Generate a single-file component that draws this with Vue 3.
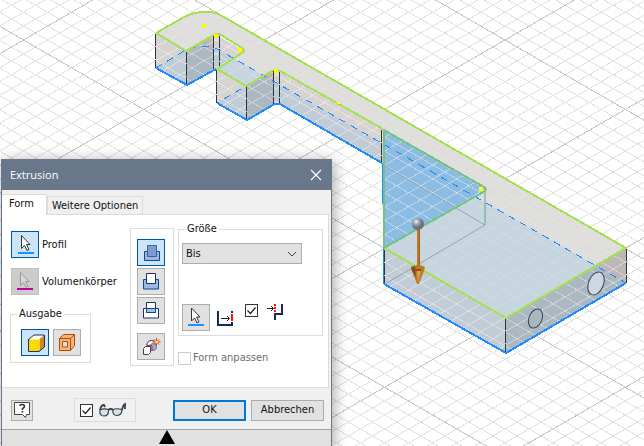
<script setup>
import { ref } from 'vue'

const target = ref('Bis')
const operation = ref('join')
const output = ref('solid')
const preview = ref(true)
const minimal = ref(true)
const matchShape = ref(false)

// Isometric ground grid: every tenth line is a major one.
const SLOPE = 0.577
const STEP = 13.89
const rising = []
const falling = []
for (let i = -60; i <= 90; i++) {
  const major = i % 10 === 0
  const y = 40 + i * STEP
  falling.push({ id: i, major, y1: y - 23.5 * SLOPE, y2: y + 1176.5 * SLOPE })
  rising.push({ id: i, major, y1: y + 23.5 * SLOPE, y2: y - 1176.5 * SLOPE })
}
const lines = [
  ...falling.map((l) => ({ ...l, id: 'f' + l.id })),
  ...rising.map((l) => ({ ...l, id: 'r' + l.id })),
].sort((a, b) => a.major - b.major)

const uprights = [
  [155, 34, 68], [186, 51, 85], [213, 36, 69], [219, 36, 68], [216, 69, 103],
  [246, 86, 119], [273, 71, 104], [279, 72, 104], [381, 130, 163],
  [384, 250, 284], [505, 318, 353], [626, 249, 283],
]
const points = [[204, 26], [216, 36], [240, 50], [276, 71], [481, 189]]

const operations = [
  { id: 'join', label: 'Vereinigung' },
  { id: 'cut', label: 'Differenz' },
  { id: 'intersect', label: 'Schnittmenge' },
  { id: 'new', label: 'Neuer Volumenkörper' },
]
</script>

<template>
  <main class="workspace">
    <svg class="scene" viewBox="0 0 644 446" preserveAspectRatio="xMinYMin slice" aria-hidden="true">
      <defs>
        <clipPath id="topClip">
          <path d="M156 33 L194 13 L219 13 L626 248 L506 318 L384 248 L384 130 L278 71 L246 86 L217 69 L244 51 L219 35 L186 51Z" />
        </clipPath>
        <clipPath id="sideClip">
          <path d="M156 33 L186 51 L216 34 L244 51 L217 69 L246 86 L276 70 L383 130 L485 189 L384 248 L506 318 L626 248 V283 L506 353 L384 284 L382 163 L279 104 L246 120 L217 103 V69 L187 85 L156 68Z" />
        </clipPath>
        <radialGradient id="ball" cx="35%" cy="30%">
          <stop offset="0" stop-color="#f1f3f6" />
          <stop offset="0.45" stop-color="#a3a8b0" />
          <stop offset="1" stop-color="#6b727c" />
        </radialGradient>
      </defs>

      <g class="grid">
        <line v-for="l in lines" :key="l.id" x1="0" x2="1200" :y1="l.y1" :y2="l.y2" :class="{ major: l.major }" />
      </g>

      <path fill="#dfdedc" d="M156 33 L184 17 Q194 12 204 12 H211 Q217 13 222 16 L626 248 L506 318 L384 248 L383 129 L280 71 Q276 68 272 71 L246 86 L217 69 L242 53 Q246 51 242 48 L221 35 Q216 33 212 36 L186 51Z" />
      <g fill="#d6d3d0">
        <path d="M156 33 L186 51 V85 L156 68Z" />
        <path d="M217 69 L246 86 V120 L217 103Z" />
        <path d="M217 35 L244 51 L217 69Z" />
        <path d="M278 71 L383 130 V163 L278 104Z" />
        <path d="M384 248 L506 318 V353 L384 284Z" />
      </g>
      <g fill="#bbb8b5">
        <path d="M186 51 L214 35 V69 L186 85Z" />
        <path d="M246 86 L274 70 V104 L246 120Z" />
        <path d="M506 318 L626 248 V283 L506 353Z" />
      </g>
      <path fill="#d3d2d2" d="M214 35 H220 V68 H214Z M274 70 H280 V104 H274Z" />
      <path fill="#7cb8ea" fill-opacity="0.24" d="M156 68 L184 51 Q204 41 222 52 L626 283 L506 353 L384 284 L382 163 L279 104 H274 L246 120 L217 103 L246 86 L217 69 L187 85Z" />

      <g clip-path="url(#topClip)" class="veil faint">
        <line v-for="l in lines" :key="l.id" x1="0" x2="1200" :y1="l.y1" :y2="l.y2" />
      </g>
      <path fill="#8dbce3" d="M383 130 L485 189 L385 248Z" />
      <g clip-path="url(#sideClip)" class="veil">
        <line v-for="l in lines" :key="l.id" x1="0" x2="1200" :y1="l.y1" :y2="l.y2" />
      </g>

      <g class="hidden-edge">
        <path d="M382 164 L485 225 L385 284" />
        <path class="teal" d="M485 192 V225" />
      </g>
      <g class="upright">
        <path v-for="u in uprights" :key="u[0]" :d="`M${u[0] + 0.5} ${u[1]} V${u[2]}`" />
      </g>
      <path class="dashed" d="M156 68 L184 51 Q193 46 204 46 Q212 46 219 50 L626 283" />
      <path class="dashed" d="M217 69 L246 86 L217 103" />
      <g class="holes">
        <ellipse cx="596" cy="283.500" rx="7.500" ry="12" transform="rotate(22 596 283.5)" fill="#ccd7e1" />
        <ellipse cx="535.500" cy="318.500" rx="6.500" ry="10" transform="rotate(22 535.5 318.5)" fill="#a9b8c0" />
      </g>
      <g class="bottom-edge">
        <path d="M156 68 L187 85 L214 70 L217 69" />
        <path d="M217 103 L247 120 L273 105 Q276 103 280 104 L382 163" />
        <path d="M384 284 L506 353 L626 283" />
        <path class="thin" d="M382.500 163 L384 284" />
      </g>
      <g class="top-edge">
        <path d="M156 33 L184 17 Q194 12 204 12 H211 Q217 13 222 16 L626 248 L506 318 L384 248" />
        <path d="M156 33 L186 51 L212 36 Q216 33 221 35 L242 48 Q246 51 242 53 L217 69 L246 86 L272 71 Q276 68 280 71 L383 129" />
        <path class="profile" d="M384 130 V248 L485 191 Q487 189 484 187Z" />
      </g>

      <g fill="#ff0">
        <rect v-for="p in points" :key="p[0]" :x="p[0] - 2" :y="p[1] - 2" width="4" height="4" />
        <rect x="337" y="102" width="3" height="2" />
      </g>

      <rect x="417" y="228" width="3" height="42" fill="#b97a2a" />
      <path fill="#a06018" d="M419 228 h1 v42 h-1z" />
      <path fill="#b97a2a" d="M411 267 Q418 263 425 267 L424 271 L419 284 H417 L412 271Z" />
      <path fill="#7c5122" d="M411 267 L415 266 L416 277 L412 271Z" />
      <path fill="#dba13e" d="M417 271 L421 271 L418 283Z" />
      <path fill="#9d4c10" d="M415 269 H421 V271 H415Z" />
      <circle cx="418" cy="224" r="6" fill="url(#ball)" />
    </svg>

    <section class="dialog" role="dialog" aria-labelledby="dialog-title">
      <header class="titlebar">
        <h1 id="dialog-title">Extrusion</h1>
        <button class="close" type="button" aria-label="Schließen">
          <svg width="12" height="12" viewBox="0 0 12 12"><path d="M1 1 L11 11 M11 1 L1 11" stroke="#fff" stroke-width="1.200" /></svg>
        </button>
      </header>

      <nav class="tabs" role="tablist">
        <button class="tab active" type="button" role="tab" aria-selected="true">Form</button>
        <button class="tab" type="button" role="tab" aria-selected="false">Weitere Optionen</button>
      </nav>

      <div class="panel">
        <div class="selectors">
          <div class="pick">
            <button id="pick-profile" class="tool selected" type="button">
              <svg width="26" height="25" viewBox="0 0 26 25">
                <path d="M9.500 3.500 V16.500 L12.500 13.500 L15 18.500 L17 17.500 L14.500 12.500 H18Z" fill="#fff" stroke="#333" />
                <path d="M6 21 H22" stroke="#1e90ff" stroke-width="2" />
              </svg>
            </button>
            <label for="pick-profile">Profil</label>
          </div>
          <div class="pick">
            <button id="pick-solid" class="tool muted" type="button">
              <svg width="26" height="25" viewBox="0 0 26 25">
                <path d="M8.500 3.500 V16.500 L11.500 13.500 L14 18.500 L16 17.500 L13.500 12.500 H17Z" fill="#d9d9d9" stroke="#999" />
                <path d="M5 20 H21" stroke="#c4009a" stroke-width="2" />
              </svg>
            </button>
            <label for="pick-solid">Volumenkörper</label>
          </div>
          <fieldset class="group output">
            <legend>Ausgabe</legend>
            <div class="output-row">
              <button class="tool" :class="{ selected: output === 'solid' }" type="button" aria-label="Volumenkörper" @click="output = 'solid'">
                <svg width="26" height="25" viewBox="0 0 26 25">
                  <path d="M7 9 L12 5 H22 V17 L17 21 H7Z" fill="#fff" stroke="#17365f" />
                  <path d="M17.500 9 L22 5.500 V17 L17.500 20.500Z" fill="#d48a17" />
                  <path d="M7 9.500 H17.500 V21 H7Z" fill="#ffd800" />
                  <path d="M6.500 9 V21.500 H17 L22.500 17 V5" fill="none" stroke="#17365f" />
                </svg>
              </button>
              <button class="tool" :class="{ selected: output === 'surface' }" type="button" aria-label="Fläche" @click="output = 'surface'">
                <svg width="26" height="25" viewBox="0 0 26 25" stroke="#a64f12">
                  <path d="M5.500 8.500 L9.500 4.500 H20.500 V15.500 L16.500 20.500 H5.500Z" fill="#ffb274" />
                  <path d="M8.500 11.500 H13.500 V17 H8.500Z" fill="#e0e0e0" />
                  <path d="M5.500 8.500 H16.500 V20.500 M16.500 8.500 L20.500 4.500" fill="none" />
                </svg>
              </button>
            </div>
          </fieldset>
        </div>

        <div class="group operations">
          <button v-for="op in operations" :key="op.id" class="tool" :class="[op.id, { selected: operation === op.id }]" type="button" :aria-label="op.label" @click="operation = op.id">
            <svg v-if="op.id === 'join'" width="26" height="25" viewBox="0 0 26 25" stroke="#0c4a91">
              <path d="M6.500 11.500 H21.500 V20.500 H6.500Z" fill="#9cb8e0" />
              <path d="M9.500 5.500 H18.500 V16.500 H9.500Z" fill="#7f9bcf" stroke="#3d62a2" />
            </svg>
            <svg v-else-if="op.id === 'cut'" width="26" height="25" viewBox="0 0 26 25" stroke="#0c4a91">
              <path d="M5.500 10.500 H20.500 V20 H5.500Z" fill="#9cb8e0" />
              <path d="M8.500 4.500 H17.500 V14.500 H8.500Z" fill="#fff" stroke="#17365f" />
            </svg>
            <svg v-else-if="op.id === 'intersect'" width="26" height="25" viewBox="0 0 26 25" stroke="#17365f">
              <path d="M5.500 10.500 H20.500 V20 H5.500Z" fill="#fff" />
              <path d="M8.500 4.500 H17.500 V14.500 H8.500Z" fill="#fff" />
              <path d="M9 11 H17 V14 H9Z" fill="#9cc0ea" stroke="none" />
              <path d="M8.500 10.500 V14.500 H17.500 V10.500Z" fill="none" stroke="#0c4a91" />
            </svg>
            <svg v-else width="26" height="25" viewBox="0 0 26 25">
              <circle cx="13.500" cy="11" r="4.500" fill="#fff" stroke="#17365f" />
              <circle cx="15" cy="13" r="3.500" fill="#8eb5e8" stroke="#5d7ea8" />
              <path d="M9 11.500 H14 V17" fill="none" stroke="#e21b1b" />
              <path d="M5.500 14.500 L7.500 12.500 H12.500 V18.500 L10.500 20.500 H5.500Z" fill="#fff" stroke="#444" />
              <path d="M18.500 4 V12 M14.500 8 H22.500 M16 5.500 L21 10.500 M21 5.500 L16 10.500" stroke="#e8380d" />
              <circle cx="18.500" cy="8" r="1.500" fill="#ffe14a" />
            </svg>
          </button>
        </div>

        <div class="extent">
          <fieldset class="group size">
            <legend>Größe</legend>
            <div class="size-body">
              <select v-model="target" aria-label="Größe">
                <option>Bis</option>
                <option>Abstand</option>
                <option>Alle</option>
              </select>
              <div class="size-row">
                <button class="tool" type="button" aria-label="Ziel wählen">
                  <svg width="26" height="25" viewBox="0 0 26 25">
                    <path d="M8.500 3 V16 L11.500 13 L14 18 L16 17 L13.500 12 H17Z" fill="#fff" stroke="#333" />
                    <path d="M5 20 H21" stroke="#1e90ff" stroke-width="2" />
                  </svg>
                </button>
                <svg class="to-face" width="17" height="17" viewBox="0 0 17 17">
                  <path d="M1 1 V15 H15 V12" fill="none" stroke="#142c57" stroke-width="2" />
                  <path d="M14 1 H16 V3 H14Z" fill="#142c57" />
                  <path d="M4 8.500 H12 M10 6 L12.500 8.500 L10 11" fill="none" stroke="#222" />
                  <path d="M15 4 V11" stroke="#f11" stroke-width="2" />
                </svg>
                <label class="min-solution">
                  <input v-model="minimal" type="checkbox" aria-label="Minimale Lösung" />
                  <svg width="17" height="17" viewBox="0 0 17 17">
                    <path d="M15 0 V10 H8 V16" fill="none" stroke="#142c57" stroke-width="2" />
                    <path d="M0 4.500 H6 M4 2 L6.500 4.500 L4 7" fill="none" stroke="#222" />
                    <path d="M8 0 V9" stroke="#f11" stroke-width="2" stroke-dasharray="2 1" />
                  </svg>
                </label>
              </div>
            </div>
          </fieldset>
          <label class="match">
            <input v-model="matchShape" type="checkbox" disabled />
            <span>Form anpassen</span>
          </label>
        </div>
      </div>

      <footer class="actions">
        <button class="help" type="button" aria-label="Hilfe">
          <svg width="18" height="18" viewBox="0 0 18 18">
            <path d="M1.500 1.500 H16.500 V13.500 H13.500 L12.500 16.500 L9.500 13.500 H1.500Z" fill="#fff" stroke="#444" />
            <path d="M7 5 Q7 3.500 9 3.500 Q11.500 3.500 11.500 5.500 Q11.500 6.500 9.500 7.500 V9 M9.500 10 V11.500" fill="none" stroke="#333" stroke-width="1.600" />
          </svg>
        </button>
        <label class="group preview">
          <input v-model="preview" type="checkbox" aria-label="Vorschau" />
          <svg width="30" height="16" viewBox="0 0 30 16" fill="none" stroke="#3a3f45">
            <path d="M2 8 Q3 3 6 3 L7 5 M24 8 Q25 3 27 2 V7" stroke-width="1.800" />
            <path d="M2 8 Q1 14 6 14 Q11 14 10.500 7.500 Q6 6 2 8Z M15 7.500 Q14 13.500 19 13.500 Q24 13 24 7.500 Q19 6 15 7.500Z" fill="#d5e2e8" stroke-width="1.200" />
            <path d="M10 8 Q13 6 15 8" stroke-width="1.800" />
          </svg>
        </label>
        <button class="push primary" type="button">OK</button>
        <button class="push" type="button">Abbrechen</button>
      </footer>

      <button class="collapse" type="button" aria-label="Einklappen">
        <svg width="16" height="14" viewBox="0 0 16 14"><path d="M8 0 L16 14 H0Z" /></svg>
      </button>
    </section>
  </main>
</template>

<style>
body {
  background: #fff;
}
</style>

<style scoped>
.workspace {
  position: relative;
  height: 100vh;
  overflow: hidden;
  font: 11px/14px "DejaVu Sans Condensed", "DejaVu Sans", sans-serif;
  color: #111;
}
.workspace * {
  box-sizing: border-box;
}
.scene {
  display: block;
  width: 100%;
  height: 100%;
}
.grid {
  stroke: #e3e3e3;
  shape-rendering: crispEdges;
}
.grid .major {
  stroke: #c6c6c6;
}
.veil {
  stroke: #fff;
  stroke-opacity: 0.38;
  shape-rendering: crispEdges;
}
.veil.faint {
  stroke-opacity: 0.12;
}
.upright {
  stroke: #2f3438;
  stroke-dasharray: 12 1;
}
.hidden-edge {
  fill: none;
  stroke: #94a5ae;
}
.hidden-edge .teal {
  stroke: #5ea58c;
}
.dashed {
  fill: none;
  stroke: #1e88ff;
  stroke-dasharray: 7 6;
  shape-rendering: crispEdges;
}
.holes {
  stroke: #39424c;
}
.bottom-edge {
  fill: none;
  stroke: #1e8bff;
  stroke-width: 2;
  shape-rendering: crispEdges;
}
.bottom-edge .thin {
  stroke-width: 1;
}
.top-edge {
  fill: none;
  stroke: #a4e052;
  stroke-width: 2;
  shape-rendering: crispEdges;
}
.top-edge .profile {
  stroke: #74c384;
}

button,
select,
input {
  margin: 0;
  padding: 0;
  font: inherit;
  color: inherit;
}
.dialog {
  position: absolute;
  left: 1px;
  top: 159px;
  width: 331px;
  border: 1px solid #68778a;
  background: #f0f0f0;
  box-shadow: 2px 2px 14px rgba(0, 0, 0, 0.35);
}
.titlebar {
  display: flex;
  align-items: center;
  justify-content: space-between;
  height: 30px;
  padding: 0 9px 0 8px;
  background: #68778a;
  color: #fff;
}
.titlebar h1 {
  margin: 0;
  font: 11px/16px "Open Sans", sans-serif;
}
.close {
  display: flex;
  border: 0;
  background: none;
}
.tabs {
  display: flex;
  align-items: flex-end;
  height: 24px;
}
.tab {
  height: 18px;
  padding: 0 4px;
  border: 1px solid #dcdcdc;
  border-bottom: 0;
  background: #f0f0f0;
}
.tab.active {
  height: 21px;
  margin-bottom: -1px;
  padding: 0 12px 2px 7px;
  border-left: 0;
  background: #fff;
  position: relative;
}
.panel {
  display: flex;
  height: 174px;
  margin-right: 2px;
  padding: 7px 5px 0 8px;
  border: 1px solid #dcdcdc;
  border-left: 0;
  background: #fff;
}
.group {
  margin: 0;
  padding: 0;
  border: 1px solid #dcdcdc;
}
.tool {
  display: flex;
  flex: none;
  width: 28px;
  height: 27px;
  border: 1px solid #adadad;
  background: #e1e1e1;
}
.tool.selected {
  border-color: #00569f;
  background: #cce4f7;
}
.tool.muted {
  background: #ccc;
  border-color: #bfbfbf;
}
.selectors {
  flex: 1;
  padding-top: 9px;
}
.pick {
  display: flex;
  align-items: center;
  gap: 3px;
  margin: 0 0 10px 1px;
}
legend {
  margin-left: 6px;
  padding: 0 2px;
}
.output {
  width: 81px;
  height: 56px;
  margin-top: 12px;
}
.output-row {
  display: flex;
  gap: 4px;
  padding: 8px 0 0 10px;
}
.operations {
  display: flex;
  flex-direction: column;
  gap: 2px;
  width: 44px;
  height: 138px;
  margin: 6px 4px 0 0;
  padding: 10px 0 0 6px;
}
.operations .new {
  margin-top: 7px;
}
.extent {
  width: 145px;
}
.size {
  height: 114px;
}
.size-body {
  padding: 7px 3px 0;
}
select {
  display: block;
  width: 120px;
  height: 21px;
  padding: 0 3px;
  border: 1px solid #adadad;
  border-radius: 0;
  appearance: none;
  background-color: #e1e1e1;
  background-image: url("data:image/svg+xml,%3Csvg xmlns='http://www.w3.org/2000/svg' width='10' height='6'%3E%3Cpath d='M1 1l4 4 4-4' fill='none' stroke='%23444'/%3E%3C/svg%3E");
  background-repeat: no-repeat;
  background-position: right 4px center;
}
.size-row {
  display: flex;
  align-items: flex-start;
  padding-top: 40px;
}
.to-face {
  margin: 6px 11px 0 7px;
}
.min-solution {
  display: flex;
  gap: 9px;
}
input[type="checkbox"] {
  flex: none;
  width: 13px;
  height: 13px;
  border: 1px solid #333;
  appearance: none;
  background: #fff;
}
input[type="checkbox"]:checked {
  background-image: url("data:image/svg+xml,%3Csvg xmlns='http://www.w3.org/2000/svg' width='11' height='11'%3E%3Cpath d='M1.500 5.500l3 3 5-6' fill='none' stroke='%23222' stroke-width='1.200'/%3E%3C/svg%3E");
}
input[type="checkbox"]:disabled {
  border-color: #ccc;
}
.match {
  display: flex;
  align-items: center;
  gap: 2px;
  margin-top: 15px;
  color: #6d6d6d;
}
.actions {
  display: flex;
  align-items: center;
  height: 41px;
  padding: 3px 7px 0 9px;
}
.help {
  display: flex;
  align-items: center;
  justify-content: center;
  width: 22px;
  height: 21px;
  border: 1px solid #adadad;
  background: #e1e1e1;
}
.preview {
  display: flex;
  align-items: center;
  gap: 5px;
  width: 62px;
  height: 24px;
  margin: 0 auto 0 41px;
  padding-left: 5px;
}
.push {
  width: 73px;
  height: 21px;
  margin-left: 5px;
  border: 1px solid #adadad;
  background: #e1e1e1;
}
.push.primary {
  border: 2px solid #0078d7;
}
.collapse {
  display: flex;
  justify-content: center;
  width: 100%;
  height: 17px;
  border: 0;
  border-top: 1px solid #a5a5a5;
  background: #e1e1e1;
}
</style>
